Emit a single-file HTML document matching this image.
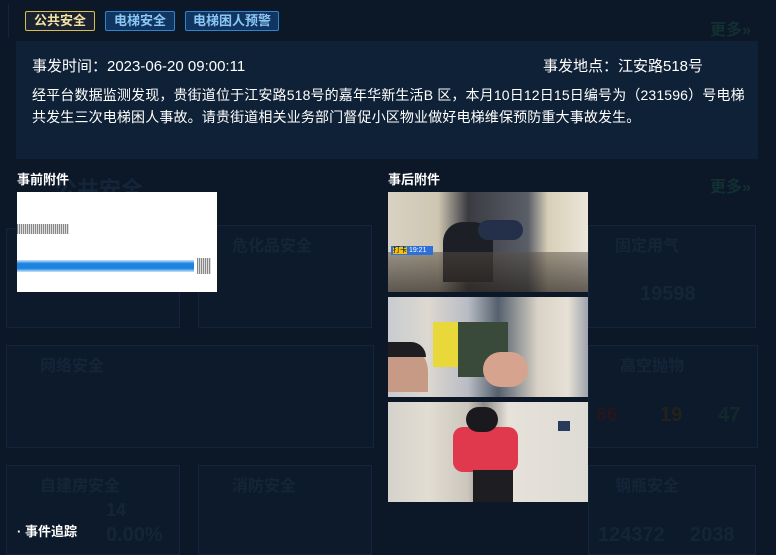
<!DOCTYPE html>
<html><head><meta charset="utf-8"><style>
*{margin:0;padding:0;box-sizing:border-box}
body{width:776px;height:555px;overflow:hidden;background:#0c1727;font-family:"Liberation Sans","Noto Sans CJK SC",sans-serif;color:#fff;position:relative}
.a{position:absolute}
.box{position:absolute;border:1px solid #15243a;background:#0d1a2b}
.faint{position:absolute;color:#152539;font-size:16px;font-weight:bold}
.tag{position:absolute;top:11px;height:20px;font-size:13px;font-weight:bold;line-height:18px;text-align:center;border-radius:2px}
</style></head><body>
<div class="box" style="left:6px;top:228px;width:174px;height:100px"></div>
<div class="box" style="left:198px;top:225px;width:174px;height:103px"></div>
<div class="box" style="left:588px;top:225px;width:168px;height:103px"></div>
<div class="box" style="left:6px;top:345px;width:368px;height:103px"></div>
<div class="box" style="left:588px;top:345px;width:170px;height:103px"></div>
<div class="box" style="left:6px;top:465px;width:174px;height:90px"></div>
<div class="box" style="left:198px;top:465px;width:174px;height:90px"></div>
<div class="box" style="left:588px;top:465px;width:168px;height:90px"></div>
<div class="faint" style="left:232px;top:232px">危化品安全</div>
<div class="faint" style="left:615px;top:232px">固定用气</div>
<div class="faint" style="left:40px;top:352px">网络安全</div>
<div class="faint" style="left:620px;top:352px">高空抛物</div>
<div class="faint" style="left:40px;top:472px">自建房安全</div>
<div class="faint" style="left:232px;top:472px">消防安全</div>
<div class="faint" style="left:615px;top:472px">钢瓶安全</div>
<div class="faint" style="left:640px;top:283px;font-size:20px">19598</div>
<div class="faint" style="left:596px;top:404px;font-size:20px;color:#24161e">66</div>
<div class="faint" style="left:660px;top:404px;font-size:20px;color:#22221a">19</div>
<div class="faint" style="left:718px;top:404px;font-size:20px;color:#11292a">47</div>
<div class="faint" style="left:598px;top:524px;font-size:20px">124372</div>
<div class="faint" style="left:690px;top:524px;font-size:20px">2038</div>
<div class="faint" style="left:106px;top:524px;font-size:20px">0.00%</div>
<div class="faint" style="left:106px;top:500px;font-size:18px">14</div>
<div class="faint" style="left:710px;top:16px;color:#123032">更多»</div>
<div class="faint" style="left:710px;top:173px;color:#123032">更多»</div>
<div class="faint" style="left:55px;top:172px;font-size:22px">公共安全</div>
<div class="a" style="left:8px;top:4px;width:768px;height:34px;border-left:1px solid #15243a"></div>

<div class="tag" style="left:25px;width:70px;border:1px solid #d9bf4f;background:#1a2230;color:#f2e2a0">公共安全</div>
<div class="tag" style="left:105px;width:70px;border:1px solid #2d86d4;background:#0f3560;color:#8cc6f5">电梯安全</div>
<div class="tag" style="left:185px;width:94px;border:1px solid #2d86d4;background:#0f3560;color:#8cc6f5">电梯困人预警</div>

<div class="a" style="left:16px;top:41px;width:742px;height:118px;background:#0f2136"></div>
<div class="a" style="left:32px;top:55px;font-size:15px">事发时间：2023-06-20 09:00:11</div>
<div class="a" style="left:543px;top:55px;font-size:15px">事发地点：江安路518号</div>
<div class="a" style="left:32px;top:84px;width:730px;font-size:14px;line-height:22px;letter-spacing:0.15px">经平台数据监测发现，贵街道位于江安路518号的嘉年华新生活B 区，本月10日12日15日编号为（231596）号电梯<br>共发生三次电梯困人事故。请贵街道相关业务部门督促小区物业做好电梯维保预防重大事故发生。</div>

<div class="a" style="left:17px;top:169px;font-size:13px;font-weight:bold">事前附件</div>
<div class="a" style="left:388px;top:169px;font-size:13px;font-weight:bold">事后附件</div>

<div class="a" style="left:17px;top:192px;width:200px;height:100px;background:#fff">
 <div class="a" style="left:0;top:32px;width:52px;height:10px;background:repeating-linear-gradient(90deg,#888 0 1px,#ddd 1px 2px)"></div>
 <div class="a" style="left:0;top:68px;width:177px;height:12px;background:linear-gradient(#cfe3f7,#1a84e0 30%,#1a84e0 70%,#cfe3f7)"></div>
 <div class="a" style="left:180px;top:66px;width:14px;height:16px;background:repeating-linear-gradient(90deg,#888 0 1px,#ddd 1px 2px)"></div>
</div>

<div class="a" style="left:388px;top:192px;width:200px;height:100px;background:linear-gradient(90deg,#d8d2c4 0,#cfc6b2 25%,#3a3b42 40%,#5a5e68 70%,#d9cfb8 80%,#ece6da 100%)">
 <div class="a" style="left:55px;top:30px;width:50px;height:60px;background:#1d1f26;border-radius:20px 20px 0 0"></div>
 <div class="a" style="left:90px;top:28px;width:45px;height:20px;background:#24304a;border-radius:10px"></div>
 <div class="a" style="left:0;top:60px;width:200px;height:40px;background:linear-gradient(rgba(90,80,70,.5),rgba(40,35,30,.7))"></div>
 <div class="a" style="left:3px;top:54px;width:42px;height:9px;background:#2f6fd8;font-size:7px;line-height:9px;color:#fff;padding-left:2px"><span style="background:#f2c40f;color:#000">打卡</span> 19:21</div>
</div>
<div class="a" style="left:388px;top:297px;width:200px;height:100px;background:linear-gradient(90deg,#c8ccd0 0,#ddd8d0 20%,#b8bcc4 40%,#55606e 55%,#d9d2c6 75%,#e6e0d6 90%,#9ea4ac 100%)">
 <div class="a" style="left:45px;top:25px;width:25px;height:45px;background:#e8d83a"></div>
 <div class="a" style="left:70px;top:25px;width:50px;height:55px;background:#3a4a3a"></div>
 <div class="a" style="left:0;top:45px;width:40px;height:50px;background:#c79a86;border-radius:0 30px 0 0"></div>
 <div class="a" style="left:0;top:45px;width:38px;height:15px;background:#1e1e22;border-radius:0 20px 0 0"></div>
 <div class="a" style="left:95px;top:55px;width:45px;height:35px;background:#d6a48e;border-radius:20px"></div>
</div>
<div class="a" style="left:388px;top:402px;width:200px;height:100px;background:linear-gradient(90deg,#d5d2cc 0,#e2ddd2 20%,#cbc6bc 40%,#8e8a84 48%,#e6e2da 60%,#dedbd5 100%)">
 <div class="a" style="left:65px;top:25px;width:65px;height:45px;background:#e0384c;border-radius:10px"></div>
 <div class="a" style="left:78px;top:5px;width:32px;height:25px;background:#1a1a1e;border-radius:16px"></div>
 <div class="a" style="left:85px;top:68px;width:40px;height:32px;background:#1d1d22"></div>
 <div class="a" style="left:170px;top:19px;width:12px;height:10px;background:#2a3a5a"></div>
</div>

<div class="a" style="left:17px;top:521px;font-size:13px;font-weight:bold">· 事件追踪</div>
</body></html>
